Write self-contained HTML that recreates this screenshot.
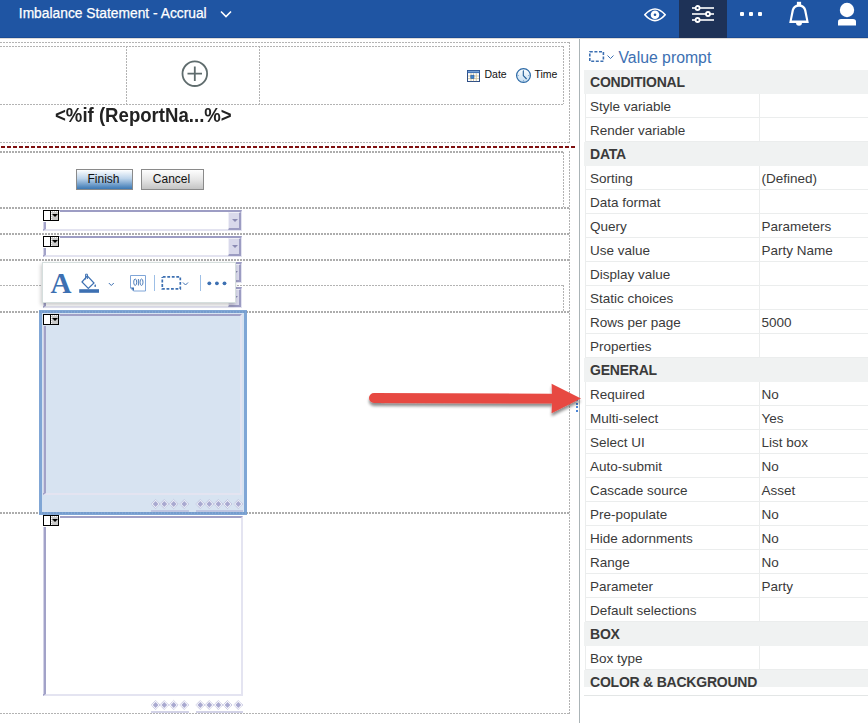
<!DOCTYPE html>
<html><head><meta charset="utf-8">
<style>
*{box-sizing:border-box;margin:0;padding:0}
html,body{width:868px;height:723px;overflow:hidden;background:#fff;font-family:"Liberation Sans",sans-serif;position:relative}
.a{position:absolute}
#hdr{left:0;top:0;width:868px;height:38px;background:#1f55a3;border-bottom:1px solid #1a4b94}
#hdrline{left:0;top:38px;width:868px;height:1px;background:#dedbd8}
.dotT{height:2px;background:repeating-linear-gradient(90deg,#adadad 0 2px,transparent 2px 3px)}
.dott{height:1px;background:repeating-linear-gradient(90deg,#b3b3b3 0 2px,transparent 2px 3px)}
.vdot{width:1px;background:repeating-linear-gradient(180deg,#b3b3b3 0 2px,transparent 2px 3px)}
.red{height:2px;background:repeating-linear-gradient(90deg,#7f1010 0 4px,transparent 4px 6px);background-position:1px 0}
.btn{font-size:12px;color:#111;text-align:center;line-height:19px;border:1px solid #8a8a8a;padding-right:2px}
.pi{width:16px;height:11px;border:1px solid #000;background:linear-gradient(90deg,#fff 0 6px,#000 6px 7px,#c9c9c9 7px);box-shadow:1px 1px 0 0 #fff,0 1px 0 0 #fff}
.pi:before{content:"";position:absolute;left:7px;top:0;width:7px;height:9px;border-top:1px dotted #fff;border-left:1px dotted #fff;box-sizing:border-box}
.pi:after{content:"";position:absolute;left:8px;top:3px;border-left:3px solid transparent;border-right:3px solid transparent;border-top:3.4px solid #000}
#panel{left:579px;top:39px;width:289px;height:684px;background:#fff;border-left:1px solid #abb4b7}
.row{position:absolute;left:6px;width:283px;height:24px;font-size:13.5px;color:#3a3a3a;line-height:24px}
.row .k{position:absolute;left:0;top:0;width:175px;height:24px;border-left:1px solid #ebeded;border-bottom:1px solid #ebeded;border-right:1px solid #ebeded;padding-left:4px;padding-top:1px}
.row .v{position:absolute;left:175px;top:0;width:108px;height:24px;border-bottom:1px solid #ebeded;padding-left:1.4px;padding-top:1px}
.row.h{background:#f0f2f2;font-weight:bold;left:5px;width:284px;font-size:14px;letter-spacing:-0.22px}
.row.h .k{border:none;padding-left:6px;padding-top:0;width:284px}
.dd{background:#fff;border-top:2px solid #9d9dc4;border-left:3px solid #a3a3c9;border-right:1px solid #e3e3f0;border-bottom:2px solid #e3e3f0}
.ddb{position:absolute;right:0;top:0;width:13px;height:18px;background:#d9d9eb;border-top:1px solid #efeff7;border-left:1px solid #efeff7;border-right:2px solid #9c9cc2;border-bottom:2px solid #9c9cc2}
.ddb:after{content:"";position:absolute;left:2.5px;top:5.5px;border-left:3px solid transparent;border-right:3px solid transparent;border-top:3px solid #8b8bb3}
.lb{border-top:2px solid #a0a0c6;border-left:3px solid #a2a2c8;border-right:2px solid #e4e4f1;border-bottom:2px solid #e4e4f1}
.lb:before,.dd:before{content:"";position:absolute;left:-3px;top:0;bottom:0;width:1px;background:#d2d2e6}
.pis{box-shadow:1px 1px 0 0 #d7e3f1,0 1px 0 0 #d7e3f1}
</style></head><body>
<div id="hdr" class="a"></div>
<div class="a" style="left:18.8px;top:4.5px;font-size:13.8px;color:#fff;line-height:18px;-webkit-text-stroke:0.25px #fff">Imbalance Statement - Accrual</div>
<svg class="a" style="left:218px;top:8px" width="16" height="12" viewBox="0 0 16 12"><path d="M3 3.5 L8 8.5 L13 3.5" fill="none" stroke="#fff" stroke-width="1.6"/></svg>
<!-- eye -->
<svg class="a" style="left:640px;top:4px" width="30" height="22" viewBox="0 0 30 22"><path d="M4.8 10.8 Q15 -0.8 25.2 10.8 Q15 22.4 4.8 10.8 Z" fill="none" stroke="#fff" stroke-width="1.7" stroke-linejoin="round"/><circle cx="15" cy="10.8" r="4.3" fill="#fff"/><circle cx="15" cy="10.8" r="1.3" fill="#1f55a3"/></svg>
<div class="a" style="left:679px;top:0;width:48px;height:38px;background:#1e3257"></div>
<svg class="a" style="left:679px;top:0" width="48" height="38" viewBox="0 0 48 38"><g stroke="#fff" stroke-width="1.6"><line x1="13" y1="8" x2="35" y2="8"/><line x1="13" y1="14" x2="35" y2="14"/><line x1="13" y1="20" x2="35" y2="20"/></g><g fill="#1e3257" stroke="#fff" stroke-width="1.8"><circle cx="18.6" cy="8" r="2"/><circle cx="29" cy="14" r="2"/><circle cx="18.6" cy="20" r="2"/></g></svg>
<svg class="a" style="left:736px;top:8px" width="30" height="12" viewBox="0 0 30 12"><g fill="#fff"><rect x="4" y="4" width="4" height="4" rx="1"/><rect x="13" y="4" width="4" height="4" rx="1"/><rect x="22" y="4" width="4" height="4" rx="1"/></g></svg>
<svg class="a" style="left:780px;top:0" width="40" height="30" viewBox="780 0 40 30"><path fill="#fff" fill-rule="evenodd" d="M789.2 23 L791.7 10 Q792.8 4.4 799 4.4 Q805.2 4.4 806.3 10 L808.8 23 Z M791.8 20.6 L793.9 10.6 Q794.8 6.7 799 6.7 Q803.2 6.7 804.1 10.6 L806.2 20.6 Z"/><rect x="796.9" y="1.8" width="4.2" height="3.6" fill="#fff"/><path d="M796 22.8 L802 22.8 Q802 25.8 799 25.8 Q796 25.8 796 22.8 Z" fill="#fff"/></svg>
<svg class="a" style="left:836px;top:0" width="24" height="28" viewBox="0 0 24 28"><circle cx="11" cy="10" r="7.2" fill="#fff"/><path d="M2 25.5 L2 21.5 Q2 19 5 19 L17 19 Q20 19 20 21.5 L20 25.5 Z" fill="#fff"/></svg>
<div id="hdrline" class="a"></div>

<!-- canvas -->
<div class="a dott" style="left:0;top:42px;width:569px"></div>
<div class="a vdot" style="left:569px;top:42px;height:101px"></div>
<div class="a vdot" style="left:569px;top:151px;height:563px"></div>
<div class="a dott" style="left:0;top:46px;width:564px"></div>
<div class="a vdot" style="left:126px;top:46px;height:58px"></div>
<div class="a vdot" style="left:259px;top:46px;height:58px"></div>
<div class="a vdot" style="left:563px;top:46px;height:58px"></div>
<div class="a dott" style="left:0;top:104px;width:564px"></div>
<svg class="a" style="left:180px;top:59px" width="30" height="30" viewBox="0 0 30 30"><circle cx="14.8" cy="14.7" r="12.3" fill="none" stroke="#5f6c6d" stroke-width="1.8"/><path d="M14.8 7.5V22M7.5 14.7H22" stroke="#5f6c6d" stroke-width="1.8"/></svg>
<!-- date time -->
<svg class="a" style="left:467px;top:70px" width="13" height="12" viewBox="0 0 13 12"><rect x="0.5" y="0.5" width="12" height="11" fill="#fff" stroke="#2f4f86" stroke-width="1"/><rect x="0.5" y="0.5" width="12" height="2.6" fill="#3b6db0"/><rect x="1" y="1.4" width="11" height="0.7" fill="#9cc0ea"/><g fill="#cdbf93"><rect x="3.6" y="3.1" width="0.8" height="8"/><rect x="6.2" y="3.1" width="0.8" height="8"/><rect x="8.8" y="3.1" width="0.8" height="8"/><rect x="1" y="5.6" width="11" height="0.8"/><rect x="1" y="8.3" width="11" height="0.8"/></g><rect x="3.8" y="5.2" width="3.2" height="3.3" fill="#3f84cc" stroke="#2a5a9a" stroke-width="0.6"/></svg>
<div class="a" style="left:484.5px;top:67px;font-size:10.5px;color:#111;line-height:14px">Date</div>
<svg class="a" style="left:515px;top:67px" width="17" height="17" viewBox="0 0 17 17"><defs><linearGradient id="cg" x1="0" y1="0" x2="0" y2="1"><stop offset="0" stop-color="#fff"/><stop offset="1" stop-color="#c3dcf0"/></linearGradient></defs><circle cx="8.5" cy="8.5" r="6.9" fill="url(#cg)" stroke="#2d6aa6" stroke-width="1.2"/><g fill="#4f86bd"><circle cx="8.5" cy="3.2" r="0.5"/><circle cx="13.8" cy="8.5" r="0.5"/><circle cx="8.5" cy="13.8" r="0.5"/><circle cx="3.2" cy="8.5" r="0.5"/></g><path d="M8.3 3.8 L8.3 8.6 L11.6 12" fill="none" stroke="#1f5b95" stroke-width="1.1"/></svg>
<div class="a" style="left:534.5px;top:67px;font-size:10.5px;color:#111;line-height:14px">Time</div>
<div class="a" style="left:55px;top:103px;font-size:20px;transform:scaleX(0.93);transform-origin:0 0;font-weight:bold;color:#222;line-height:24px;white-space:nowrap">&lt;%if (ReportNa...%&gt;</div>
<div class="a dott" style="left:0;top:142px;width:569px"></div>
<div class="a red" style="left:0;top:146px;width:576px"></div>
<div class="a dotT" style="left:0;top:151px;width:564px"></div>
<div class="a vdot" style="left:563px;top:152px;height:55px"></div>
<div class="a btn" style="left:76px;top:169px;width:57px;height:21px;background:linear-gradient(#fdfeff,#bcd3ea 45%,#3b78b4)">Finish</div>
<div class="a btn" style="left:141px;top:169px;width:63px;height:21px;background:linear-gradient(#fefefe,#e6e6e6 50%,#c4c4c4)">Cancel</div>
<div class="a dotT" style="left:0;top:207px;width:569px"></div>
<div class="a dotT" style="left:0;top:233px;width:569px"></div>
<div class="a dotT" style="left:0;top:259px;width:569px"></div>
<div class="a dott" style="left:0;top:285px;width:564px"></div>
<div class="a vdot" style="left:563px;top:285px;height:26px"></div>
<div class="a dotT" style="left:0;top:311px;width:569px"></div>
<div class="a dotT" style="left:0;top:512px;width:569px"></div>
<div class="a dott" style="left:0;top:713px;width:569px"></div>


<!-- dropdowns -->
<div class="a dd" style="left:43px;top:210px;width:199px;height:21px"><div class="ddb"></div></div>
<div class="a pi" style="left:43px;top:210px"></div>
<div class="a dd" style="left:43px;top:236px;width:199px;height:21px"><div class="ddb"></div></div>
<div class="a pi" style="left:43px;top:236px"></div>
<div class="a dd" style="left:43px;top:262px;width:199px;height:21px"><div class="ddb"></div></div>
<div class="a pi" style="left:43px;top:262px"></div>
<div class="a dd" style="left:43px;top:287px;width:199px;height:21px"><div class="ddb"></div></div>
<div class="a pi" style="left:43px;top:287px"></div>
<!-- selected list -->
<div class="a" style="left:39px;top:310px;width:208px;height:205px;background:#d7e3f1;border:3px solid #80a6d5"></div>
<div class="a" style="left:39px;top:311px;width:208px;height:2px;background:repeating-linear-gradient(90deg,#6e96c8 0 2px,transparent 2px 3px);opacity:0.6"></div>
<div class="a" style="left:39px;top:512px;width:208px;height:2px;background:repeating-linear-gradient(90deg,#6e96c8 0 2px,transparent 2px 3px);opacity:0.6"></div>
<div class="a lb" style="left:43px;top:314px;width:199px;height:181px"></div>
<div class="a pi pis" style="left:43px;top:314px"></div>
<svg class="a" style="left:140px;top:495.5px" width="110" height="16" viewBox="0 0 110 16"><g transform="translate(-140,-495.5)"><path d="M155.6 499.0 L160.1 503.5 L155.6 508.0 L151.1 503.5 Z" fill="#fff" fill-opacity="0.6" stroke="#b4b4d8" stroke-width="1" stroke-dasharray="1 0.7"/><path d="M155.6 500.60 L158.50 503.50 L155.6 506.40 L152.70 503.50 Z" fill="#a9a9d0"/><path d="M164.3 499.0 L168.8 503.5 L164.3 508.0 L159.8 503.5 Z" fill="#fff" fill-opacity="0.6" stroke="#b4b4d8" stroke-width="1" stroke-dasharray="1 0.7"/><path d="M164.3 500.60 L167.20 503.50 L164.3 506.40 L161.40 503.50 Z" fill="#a9a9d0"/><path d="M173.7 499.0 L178.2 503.5 L173.7 508.0 L169.2 503.5 Z" fill="#fff" fill-opacity="0.6" stroke="#b4b4d8" stroke-width="1" stroke-dasharray="1 0.7"/><path d="M173.7 500.60 L176.60 503.50 L173.7 506.40 L170.80 503.50 Z" fill="#a9a9d0"/><path d="M184.3 499.0 L188.8 503.5 L184.3 508.0 L179.8 503.5 Z" fill="#fff" fill-opacity="0.6" stroke="#b4b4d8" stroke-width="1" stroke-dasharray="1 0.7"/><path d="M184.3 500.60 L187.20 503.50 L184.3 506.40 L181.40 503.50 Z" fill="#a9a9d0"/><path d="M200.3 499.0 L204.8 503.5 L200.3 508.0 L195.8 503.5 Z" fill="#fff" fill-opacity="0.6" stroke="#b4b4d8" stroke-width="1" stroke-dasharray="1 0.7"/><path d="M200.3 500.60 L203.20 503.50 L200.3 506.40 L197.40 503.50 Z" fill="#a9a9d0"/><path d="M209.3 499.0 L213.8 503.5 L209.3 508.0 L204.8 503.5 Z" fill="#fff" fill-opacity="0.6" stroke="#b4b4d8" stroke-width="1" stroke-dasharray="1 0.7"/><path d="M209.3 500.60 L212.20 503.50 L209.3 506.40 L206.40 503.50 Z" fill="#a9a9d0"/><path d="M218.4 499.0 L222.9 503.5 L218.4 508.0 L213.9 503.5 Z" fill="#fff" fill-opacity="0.6" stroke="#b4b4d8" stroke-width="1" stroke-dasharray="1 0.7"/><path d="M218.4 500.60 L221.30 503.50 L218.4 506.40 L215.50 503.50 Z" fill="#a9a9d0"/><path d="M227.5 499.0 L232.0 503.5 L227.5 508.0 L223.0 503.5 Z" fill="#fff" fill-opacity="0.6" stroke="#b4b4d8" stroke-width="1" stroke-dasharray="1 0.7"/><path d="M227.5 500.60 L230.40 503.50 L227.5 506.40 L224.60 503.50 Z" fill="#a9a9d0"/><path d="M238.3 499.0 L242.8 503.5 L238.3 508.0 L233.8 503.5 Z" fill="#fff" fill-opacity="0.6" stroke="#b4b4d8" stroke-width="1" stroke-dasharray="1 0.7"/><path d="M238.3 500.60 L241.20 503.50 L238.3 506.40 L235.40 503.50 Z" fill="#a9a9d0"/><rect x="151" y="510.0" width="38" height="1" fill="#a8a8d2"/><rect x="196" y="510.0" width="47" height="1" fill="#a8a8d2"/></g></svg>
<div class="a lb" style="left:43px;top:516px;width:200px;height:180px;background:#fff"></div>
<div class="a pi" style="left:43px;top:515px"></div>
<svg class="a" style="left:140px;top:696.5px" width="110" height="16" viewBox="0 0 110 16"><g transform="translate(-140,-696.5)"><path d="M155.6 700.0 L160.1 704.5 L155.6 709.0 L151.1 704.5 Z" fill="#fff" fill-opacity="0.6" stroke="#b4b4d8" stroke-width="1" stroke-dasharray="1 0.7"/><path d="M155.6 701.60 L158.50 704.50 L155.6 707.40 L152.70 704.50 Z" fill="#a9a9d0"/><path d="M164.3 700.0 L168.8 704.5 L164.3 709.0 L159.8 704.5 Z" fill="#fff" fill-opacity="0.6" stroke="#b4b4d8" stroke-width="1" stroke-dasharray="1 0.7"/><path d="M164.3 701.60 L167.20 704.50 L164.3 707.40 L161.40 704.50 Z" fill="#a9a9d0"/><path d="M173.7 700.0 L178.2 704.5 L173.7 709.0 L169.2 704.5 Z" fill="#fff" fill-opacity="0.6" stroke="#b4b4d8" stroke-width="1" stroke-dasharray="1 0.7"/><path d="M173.7 701.60 L176.60 704.50 L173.7 707.40 L170.80 704.50 Z" fill="#a9a9d0"/><path d="M184.3 700.0 L188.8 704.5 L184.3 709.0 L179.8 704.5 Z" fill="#fff" fill-opacity="0.6" stroke="#b4b4d8" stroke-width="1" stroke-dasharray="1 0.7"/><path d="M184.3 701.60 L187.20 704.50 L184.3 707.40 L181.40 704.50 Z" fill="#a9a9d0"/><path d="M200.3 700.0 L204.8 704.5 L200.3 709.0 L195.8 704.5 Z" fill="#fff" fill-opacity="0.6" stroke="#b4b4d8" stroke-width="1" stroke-dasharray="1 0.7"/><path d="M200.3 701.60 L203.20 704.50 L200.3 707.40 L197.40 704.50 Z" fill="#a9a9d0"/><path d="M209.3 700.0 L213.8 704.5 L209.3 709.0 L204.8 704.5 Z" fill="#fff" fill-opacity="0.6" stroke="#b4b4d8" stroke-width="1" stroke-dasharray="1 0.7"/><path d="M209.3 701.60 L212.20 704.50 L209.3 707.40 L206.40 704.50 Z" fill="#a9a9d0"/><path d="M218.4 700.0 L222.9 704.5 L218.4 709.0 L213.9 704.5 Z" fill="#fff" fill-opacity="0.6" stroke="#b4b4d8" stroke-width="1" stroke-dasharray="1 0.7"/><path d="M218.4 701.60 L221.30 704.50 L218.4 707.40 L215.50 704.50 Z" fill="#a9a9d0"/><path d="M227.5 700.0 L232.0 704.5 L227.5 709.0 L223.0 704.5 Z" fill="#fff" fill-opacity="0.6" stroke="#b4b4d8" stroke-width="1" stroke-dasharray="1 0.7"/><path d="M227.5 701.60 L230.40 704.50 L227.5 707.40 L224.60 704.50 Z" fill="#a9a9d0"/><path d="M238.3 700.0 L242.8 704.5 L238.3 709.0 L233.8 704.5 Z" fill="#fff" fill-opacity="0.6" stroke="#b4b4d8" stroke-width="1" stroke-dasharray="1 0.7"/><path d="M238.3 701.60 L241.20 704.50 L238.3 707.40 L235.40 704.50 Z" fill="#a9a9d0"/><rect x="151" y="711.0" width="38" height="1" fill="#a8a8d2"/><rect x="196" y="711.0" width="47" height="1" fill="#a8a8d2"/></g></svg>
<!-- toolbar -->
<div class="a" style="left:42px;top:262px;width:194px;height:41px;background:#fff;border:1px solid #d5dedd;box-shadow:-1px 2px 4px rgba(0,0,0,0.22)"></div>
<svg class="a" style="left:42px;top:262px" width="194" height="41" viewBox="42 262 194 41">
<text x="50.5" y="293" font-family="Liberation Serif" font-weight="bold" font-size="30" fill="#3d70b2" textLength="21" lengthAdjust="spacingAndGlyphs">A</text>
<path d="M82 282 L87.3 275.8 L94 283 L88.3 288.5 Z" fill="none" stroke="#3d70b2" stroke-width="1.2" stroke-linejoin="miter"/>
<path d="M85.6 279.5 L85.6 274.2 L87.4 274.2 L87.4 279" fill="none" stroke="#3d70b2" stroke-width="1"/>
<path d="M95.2 284 Q96.6 286 95.8 286.8 Q94.6 287.2 94.3 286.3 Q94.3 285.3 95.2 284Z" fill="#3d70b2"/>
<rect x="79.2" y="289.2" width="19.8" height="3.6" fill="#3d70b2"/>
<path d="M108.8 283 L111.3 285.5 L113.8 283" fill="none" stroke="#3d70b2" stroke-width="1"/>
<path d="M130.5 275.5 H145.5 V291 H133.5 L130.5 288 Z" fill="none" stroke="#80a6d8" stroke-width="1"/>
<path d="M130.5 287.5 L134 287.5 L134 291 Z" fill="#3d70b2"/>
<g fill="none" stroke="#3d70b2" stroke-width="0.9"><ellipse cx="135.2" cy="282.2" rx="1.5" ry="3.2"/><ellipse cx="141.5" cy="282.2" rx="1.5" ry="3.2"/><line x1="138.4" y1="279" x2="138.4" y2="285.5"/></g>
<rect x="154" y="275" width="1" height="16" fill="#9dbfe6"/>
<rect x="162.3" y="276.9" width="18" height="12" fill="none" stroke="#3d70b2" stroke-width="1.7" stroke-dasharray="2.8 1.7" stroke-dashoffset="-0.5"/>
<path d="M183 282.5 L185.5 285 L188 282.5" fill="none" stroke="#3d70b2" stroke-width="1"/>
<rect x="200" y="275" width="1" height="16" fill="#9dbfe6"/>
<circle cx="209.3" cy="283.3" r="1.9" fill="#3d70b2"/><circle cx="216.9" cy="283.3" r="1.9" fill="#3d70b2"/><circle cx="224.5" cy="283.3" r="1.9" fill="#3d70b2"/>
</svg>

<div id="panel" class="a"></div>
<div class="a" style="left:579px;top:38px;width:289px;height:649px;overflow:hidden">
<svg class="a" style="left:10px;top:12px" width="30" height="14" viewBox="0 0 30 14"><rect x="0.8" y="1.8" width="13.6" height="9.4" fill="none" stroke="#3d70b2" stroke-width="1.6" stroke-dasharray="3 1.6"/><path d="M18.5 5.5 L21.5 8.5 L24.5 5.5" fill="none" stroke="#3d70b2" stroke-width="1"/></svg>
<div class="a" style="left:39.5px;top:10px;font-size:15.8px;color:#3d70b2;line-height:20px;white-space:nowrap">Value prompt</div>
<div class="row h" style="top:32px"><div class="k">CONDITIONAL</div></div>
<div class="row" style="top:56px"><div class="k">Style variable</div><div class="v"></div></div>
<div class="row" style="top:80px"><div class="k">Render variable</div><div class="v"></div></div>
<div class="row h" style="top:104px"><div class="k">DATA</div></div>
<div class="row" style="top:128px"><div class="k">Sorting</div><div class="v">(Defined)</div></div>
<div class="row" style="top:152px"><div class="k">Data format</div><div class="v"></div></div>
<div class="row" style="top:176px"><div class="k">Query</div><div class="v">Parameters</div></div>
<div class="row" style="top:200px"><div class="k">Use value</div><div class="v">Party Name</div></div>
<div class="row" style="top:224px"><div class="k">Display value</div><div class="v"></div></div>
<div class="row" style="top:248px"><div class="k">Static choices</div><div class="v"></div></div>
<div class="row" style="top:272px"><div class="k">Rows per page</div><div class="v">5000</div></div>
<div class="row" style="top:296px"><div class="k">Properties</div><div class="v"></div></div>
<div class="row h" style="top:320px"><div class="k">GENERAL</div></div>
<div class="row" style="top:344px"><div class="k">Required</div><div class="v">No</div></div>
<div class="row" style="top:368px"><div class="k">Multi-select</div><div class="v">Yes</div></div>
<div class="row" style="top:392px"><div class="k">Select UI</div><div class="v">List box</div></div>
<div class="row" style="top:416px"><div class="k">Auto-submit</div><div class="v">No</div></div>
<div class="row" style="top:440px"><div class="k">Cascade source</div><div class="v">Asset</div></div>
<div class="row" style="top:464px"><div class="k">Pre-populate</div><div class="v">No</div></div>
<div class="row" style="top:488px"><div class="k">Hide adornments</div><div class="v">No</div></div>
<div class="row" style="top:512px"><div class="k">Range</div><div class="v">No</div></div>
<div class="row" style="top:536px"><div class="k">Parameter</div><div class="v">Party</div></div>
<div class="row" style="top:560px"><div class="k">Default selections</div><div class="v"></div></div>
<div class="row h" style="top:584px"><div class="k">BOX</div></div>
<div class="row" style="top:608px"><div class="k">Box type</div><div class="v"></div></div>
<div class="row h" style="top:632px"><div class="k">COLOR &amp; BACKGROUND</div></div>
</div>
<div class="a" style="left:584px;top:695px;width:284px;height:1px;background:#e3e6e6"></div>



<div class="a" style="left:576px;top:399px;width:2px;height:2px;background:#4a86d8"></div>
<div class="a" style="left:576px;top:403px;width:2px;height:2px;background:#4a86d8"></div>
<div class="a" style="left:576px;top:406px;width:2px;height:2px;background:#4a86d8"></div>
<div class="a" style="left:576px;top:410px;width:2px;height:2px;background:#4a86d8"></div>
<!-- arrow -->
<svg class="a" style="left:360px;top:375px" width="230" height="50" viewBox="360 375 230 50">
<defs><filter id="sh" x="-10%" y="-50%" width="120%" height="200%"><feGaussianBlur in="SourceAlpha" stdDeviation="1.6"/><feOffset dx="0" dy="2.5"/><feComponentTransfer><feFuncA type="linear" slope="0.45"/></feComponentTransfer><feMerge><feMergeNode/><feMergeNode in="SourceGraphic"/></feMerge></filter></defs>
<g filter="url(#sh)" fill="#e74a43"><path d="M374 393 L552 393.7 L551.6 383.7 L581 398.6 L551.6 413.2 L552 403.6 L374 403 A5 5 0 0 1 374 393 Z"/></g>
</svg>
</body></html>
